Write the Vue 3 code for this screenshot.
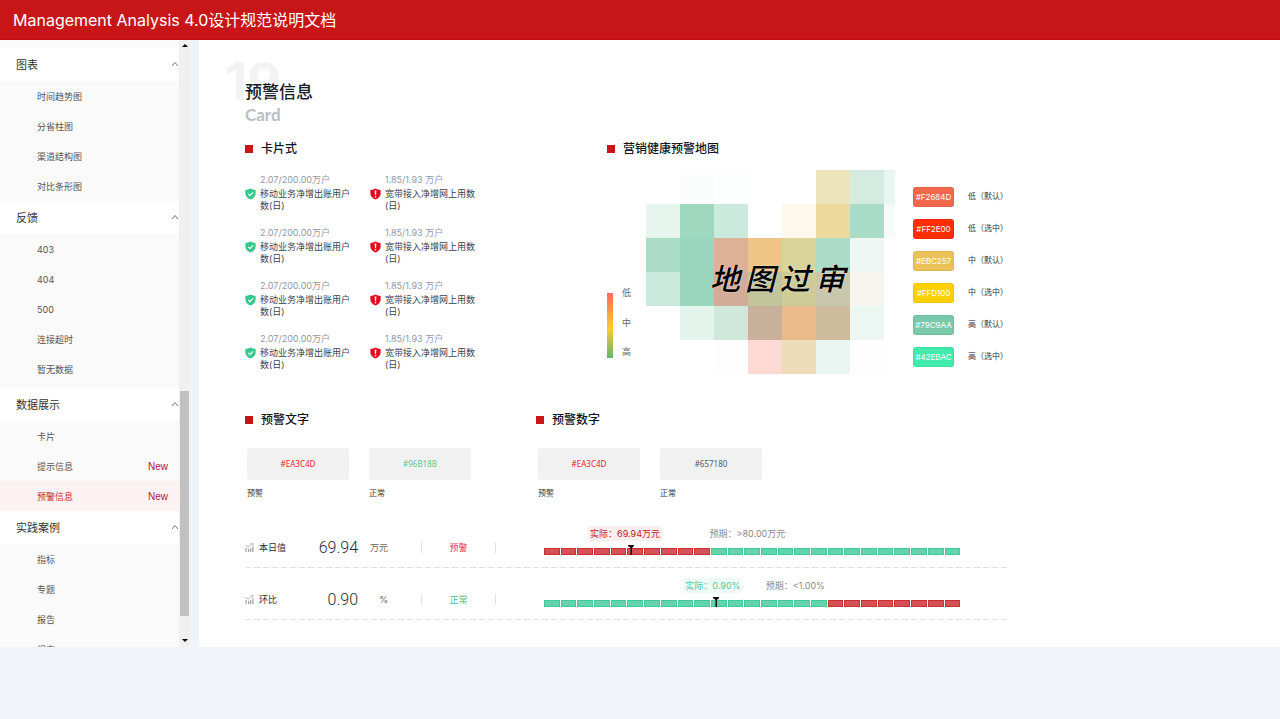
<template>
  <div class="page">
    <header class="topbar">
      <h1>Management Analysis 4.0设计规范说明文档</h1>
    </header>

    <div class="workspace">
      <aside class="sidebar">
        <nav class="menu">
          <section v-for="group in menu" :key="group.title" class="menu-group">
            <button type="button" class="menu-title">
              <span>{{ group.title }}</span>
              <svg class="chevron" viewBox="0 0 8 6">
                <path d="M1 5 L4 1.5 L7 5" fill="none" stroke="#777" stroke-width="1" />
              </svg>
            </button>
            <a
              v-for="item in group.items"
              :key="item.name"
              href="#"
              class="menu-item"
              :class="{ active: item.active }"
            >
              <span>{{ item.name }}</span>
              <span v-if="item.isNew" class="tag-new">New</span>
            </a>
          </section>
        </nav>
        <div class="scrollbar">
          <span class="arrow up" />
          <span class="thumb" />
          <span class="arrow down" />
        </div>
      </aside>

      <main class="content">
        <div class="title-block">
          <span class="title-no">19</span>
          <h2>预警信息</h2>
          <p>Card</p>
        </div>

        <div class="row-top">
          <section>
            <h3 class="section-title">卡片式</h3>
            <div class="cards">
              <template v-for="n in 4" :key="n">
                <div v-for="card in cards" :key="card.label" class="card">
                  <svg v-if="card.ok" class="shield" viewBox="0 0 12 12">
                    <path d="M6 0 Q8.5 1.4 11.6 1.6 V5.5 Q11.4 10 6 12 Q0.6 10 0.4 5.5 V1.6 Q3.5 1.4 6 0Z" fill="#35c78b" />
                    <path d="M3.4 5.8 L5.4 7.8 L8.8 4.2" fill="none" stroke="#fff" stroke-width="1.2" />
                  </svg>
                  <svg v-else class="shield" viewBox="0 0 12 12">
                    <path d="M6 0 Q8.5 1.4 11.6 1.6 V5.5 Q11.4 10 6 12 Q0.6 10 0.4 5.5 V1.6 Q3.5 1.4 6 0Z" fill="#e60c20" />
                    <path d="M5.1 2.3 H6.9 L6.6 7.2 H5.4Z" fill="#fff" />
                    <circle cx="6" cy="8.9" r="0.9" fill="#fff" />
                  </svg>
                  <div>
                    <div class="card-value">{{ card.value }}</div>
                    <div class="card-label">{{ card.label }}<br>{{ card.label2 }}</div>
                  </div>
                </div>
              </template>
            </div>
          </section>

          <section>
            <h3 class="section-title">营销健康预警地图</h3>
            <div class="map-body">
              <div class="legend">
                <span class="legend-bar" />
                <div class="legend-text">
                  <span>低</span>
                  <span>中</span>
                  <span>高</span>
                </div>
              </div>
              <div class="map">
                <span
                  v-for="(color, i) in mapCells"
                  :key="i"
                  :style="{ background: color }"
                />
                <div class="map-mark">
                  <span v-for="ch in '地图过审'" :key="ch">{{ ch }}</span>
                </div>
              </div>
              <ul class="swatches">
                <li v-for="s in swatches" :key="s.color">
                  <span class="swatch" :style="{ background: s.color }">{{ s.code }}</span>
                  <span>{{ s.label }}</span>
                </li>
              </ul>
            </div>
          </section>
        </div>

        <div class="row-mid">
          <section v-for="block in blocks" :key="block.title">
            <h3 class="section-title">{{ block.title }}</h3>
            <div class="samples">
              <div v-for="s in block.samples" :key="s.name">
                <div class="sample-box" :style="{ color: s.color }">{{ s.code }}</div>
                <div class="sample-name">{{ s.name }}</div>
              </div>
            </div>
          </section>
        </div>

        <div class="metrics">
          <div v-for="m in metrics" :key="m.name" class="metric">
            <div class="metric-info">
              <span class="metric-name">
                <svg class="chart-icon" viewBox="0 0 10 10">
                  <path d="M1.2 5.5 V10 M4 6.5 V10 M6.4 5.5 V10 M8.8 3.5 V10" stroke="#a3a3a3" stroke-width="1.4" />
                  <path d="M0.3 2.5 L3.6 4.4 L8.6 0.8 M6.8 0.6 H9 V2.6" fill="none" stroke="#a3a3a3" stroke-width="0.8" />
                </svg>
                {{ m.name }}
              </span>
              <span class="metric-value">{{ m.value }}</span>
              <span class="metric-unit">{{ m.unit }}</span>
              <span class="metric-status" :class="m.state">{{ m.status }}</span>
            </div>
            <div class="gauge">
              <span class="actual" :class="m.state" :style="{ left: `${m.actualPos}%` }">{{ m.actual }}</span>
              <span class="expected" :style="{ left: `${m.expectedPos}%` }">{{ m.expected }}</span>
              <div class="gauge-bar">
                <span
                  v-for="n in 25"
                  :key="n"
                  class="seg"
                  :class="{ bad: (n <= m.split) === m.badFirst }"
                />
                <svg class="marker" viewBox="0 0 6 10" :style="{ left: `${m.markerPos}%` }">
                  <path d="M0 0 H6 V1 L4 3 V10 H2.5 V3 L0 1Z" fill="#111" />
                </svg>
              </div>
            </div>
          </div>
        </div>
      </main>
    </div>
  </div>
</template>

<script setup>
const menu = [
  {
    title: '图表',
    items: [{ name: '时间趋势图' }, { name: '分省柱图' }, { name: '渠道结构图' }, { name: '对比条形图' }]
  },
  {
    title: '反馈',
    items: [{ name: '403' }, { name: '404' }, { name: '500' }, { name: '连接超时' }, { name: '暂无数据' }]
  },
  {
    title: '数据展示',
    items: [{ name: '卡片' }, { name: '提示信息', isNew: true }, { name: '预警信息', isNew: true, active: true }]
  },
  {
    title: '实践案例',
    items: [{ name: '指标' }, { name: '专题' }, { name: '报告' }, { name: '报表' }]
  }
]

const cards = [
  { ok: true, value: '2.07/200.00万户', label: '移动业务净增出账用户', label2: '数(日)' },
  { ok: false, value: '1.85/1.93 万户', label: '宽带接入净增网上用数', label2: '(日)' }
]

// 8 columns x 6 rows, the last column is cut off
const none = 'transparent'
const mapCells = [
  none, '#fafdfc', '#fdfefe', none, none, '#ece3ba', '#d4ebdf', '#e9f5f1',
  '#e6f5ee', '#9dd8bf', '#c9eadd', none, '#fef7ec', '#edd99b', '#a9dcc6', '#f6fbfa',
  '#abdcc8', '#9ad5bd', '#dcb196', '#f0c485', '#d9d49a', '#abdcc8', '#eef7f4', none,
  '#c9eadd', '#99d4bc', '#d1ad99', '#c2c49c', '#cfcb98', '#c8c7ac', '#f6f6ee', none,
  none, '#e3f4ed', '#cfe8db', '#c9b09a', '#ecbb8c', '#cfbc9c', '#ecf7f3', none,
  none, none, '#fefefe', '#fcdad3', '#eddcb8', '#e9f5f1', '#fefefe', none
]

const swatches = [
  { code: '#F2684D', color: '#f2684d', label: '低（默认）' },
  { code: '#FF2E00', color: '#ff2e00', label: '低（选中）' },
  { code: '#EBC257', color: '#ebc257', label: '中（默认）' },
  { code: '#FFD100', color: '#ffd100', label: '中（选中）' },
  { code: '#79C9AA', color: '#79c9aa', label: '高（默认）' },
  { code: '#42EBAC', color: '#42ebac', label: '高（选中）' }
]

const blocks = [
  {
    title: '预警文字',
    samples: [
      { code: '#EA3C4D', color: '#e8202c', name: '预警' },
      { code: '#96B18B', color: '#5fc794', name: '正常' }
    ]
  },
  {
    title: '预警数字',
    samples: [
      { code: '#EA3C4D', color: '#e8202c', name: '预警' },
      { code: '#657180', color: '#555b62', name: '正常' }
    ]
  }
]

const metrics = [
  {
    name: '本日值', value: '69.94', unit: '万元', status: '预警', state: 'warn',
    actual: '实际：69.94万元', actualPos: 10.6, expected: '预期：>80.00万元', expectedPos: 39.8,
    markerPos: 21, split: 10, badFirst: true
  },
  {
    name: '环比', value: '0.90', unit: '%', status: '正常', state: 'good',
    actual: '实际：0.90%', actualPos: 33.5, expected: '预期：<1.00%', expectedPos: 53.3,
    markerPos: 41.4, split: 17, badFirst: false
  }
]
</script>

<style>
body {
  margin: 0;
  background: #f0f4f9;
}
</style>

<style scoped>
.page {
  min-height: 100vh;
  background: #f0f4f9;
  font-family: Inter, "Noto Sans CJK SC", sans-serif;
  font-size: 9px;
  color: #333;
}

h1, h2, h3, p, ul {
  margin: 0;
  padding: 0;
  font-weight: normal;
}

.topbar {
  display: flex;
  align-items: center;
  height: 40px;
  box-sizing: border-box;
  padding: 0 13px;
  background: #c81618;
  border-bottom: 1px solid #b80c0e;
}

.topbar h1 {
  font-size: 16px;
  line-height: 24px;
  color: #fff;
}

.workspace {
  display: flex;
  gap: 9px;
  height: calc(100vh - 112px);
}

.sidebar {
  display: flex;
  flex: none;
  width: 190px;
  overflow: hidden;
  background: #fafafa;
}

.menu {
  flex: 1;
  padding-top: 8px;
}

.menu-group:nth-child(2) {
  padding-bottom: 4px;
}

.menu-title {
  display: flex;
  align-items: center;
  justify-content: space-between;
  width: 100%;
  height: 33px;
  padding: 0 0 1px 16px;
  border: 0;
  background: #fff;
  font-family: inherit;
  font-size: 11px;
  color: #333;
}

.chevron {
  width: 8px;
  height: 6px;
}

.menu-item {
  display: flex;
  align-items: center;
  justify-content: space-between;
  height: 30px;
  padding: 0 11px 0 37px;
  color: #555;
  text-decoration: none;
}

.menu-item.active {
  background: #fcf2f3;
  color: #c8282c;
}

.tag-new {
  font-family: "Liberation Sans", sans-serif;
  font-size: 10px;
  color: #b8123c;
}

.scrollbar {
  display: flex;
  flex-direction: column;
  align-items: center;
  width: 11px;
  background: #f0f0f0;
}

.thumb {
  width: 9px;
  height: 37%;
  margin: auto 0 16px;
  background: #c1c1c1;
}

.arrow {
  border: 3px solid transparent;
}

.arrow.up {
  margin-top: 1px;
  border-bottom-color: #000;
}

.arrow.down {
  margin: 7px 0 2px;
  border-top-color: #000;
}

.content {
  flex: 1;
  min-width: 0;
  padding: 40px 46px 0;
  background: #fff;
  overflow: hidden;
}

.title-block {
  position: relative;
}

.title-no {
  position: absolute;
  left: -20px;
  top: -26px;
  font-size: 52px;
  font-weight: bold;
  line-height: 56px;
  color: #f3f3f6;
}

.title-block h2 {
  position: relative;
  font-size: 17px;
  font-weight: 500;
  line-height: 24px;
  color: #111827;
}

.title-block p {
  position: relative;
  font-family: Lato, sans-serif;
  font-size: 17px;
  font-weight: bold;
  line-height: 22px;
  color: #b9bec6;
}

.row-top {
  display: grid;
  grid-template-columns: 362px 1fr;
  margin-top: 15px;
}

.section-title {
  display: flex;
  align-items: center;
  gap: 8px;
  font-size: 12px;
  font-weight: 500;
  line-height: 16px;
  color: #10141f;
}

.section-title::before {
  content: "";
  width: 8px;
  height: 8px;
  background: #c81618;
}

.cards {
  display: grid;
  grid-template-columns: 125px 125px;
  row-gap: 15px;
  padding-top: 17px;
}

.card {
  display: flex;
  gap: 4px;
  line-height: 12px;
  white-space: nowrap;
}

.shield {
  flex: none;
  width: 11px;
  height: 12px;
  margin-top: 14px;
}

.card-value {
  margin-bottom: 2px;
  color: #9297a8;
}

.card-label {
  color: #3a3f50;
}

.map-body {
  display: flex;
  padding-top: 13px;
}

.legend {
  display: flex;
  align-self: flex-end;
  gap: 9px;
  width: 39px;
  margin-bottom: 16px;
}

.legend-bar {
  width: 6px;
  height: 65px;
  align-self: flex-end;
  background: linear-gradient(#ff6a58, #fccb2e 55%, #62b474);
}

.legend-text {
  display: flex;
  flex-direction: column;
  justify-content: space-between;
  height: 71px;
  line-height: 12px;
  color: #666;
}

.map {
  position: relative;
  display: grid;
  grid-template-columns: repeat(7, 34px) 11px;
  grid-auto-rows: 34px;
}

.map-mark {
  position: absolute;
  left: 64px;
  top: 87px;
  display: flex;
  gap: 5px;
  font-size: 30px;
  font-style: italic;
  font-weight: 500;
  line-height: 44px;
  color: #000;
  text-shadow: 0 0 2px rgba(255, 255, 255, 0.7);
}

.swatches {
  display: flex;
  flex-direction: column;
  gap: 12px;
  margin: 17px 0 0 18px;
  list-style: none;
  font-size: 8px;
  line-height: 18px;
}

.swatches li {
  display: flex;
  align-items: flex-start;
  gap: 14px;
  white-space: nowrap;
}

.swatch {
  width: 41px;
  height: 20px;
  box-sizing: border-box;
  border: 1px solid rgba(0, 0, 0, 0.06);
  border-radius: 3px;
  text-align: center;
  color: #fff;
}

.row-mid {
  display: grid;
  grid-template-columns: 291px 1fr;
  margin-top: 38px;
}

.samples {
  display: flex;
  gap: 20px;
  padding: 20px 0 0 2px;
  font-size: 8px;
}

.sample-box {
  width: 102px;
  height: 32px;
  border-radius: 3px;
  background: #f1f1f1;
  font-family: "Noto Sans", sans-serif;
  line-height: 32px;
  text-align: center;
}

.sample-name {
  margin-top: 7px;
  line-height: 12px;
}

.metrics {
  max-width: 762px;
  margin-top: 17px;
}

.metric {
  display: flex;
  height: 52px;
  background: repeating-linear-gradient(to right, #dfe1e8 0 6px, transparent 6px 9px) left bottom / 100% 1px no-repeat;
}

.metric-info {
  display: flex;
  align-items: center;
  flex: none;
  padding-top: 11px;
}

.metric-name {
  display: flex;
  align-items: center;
  gap: 5px;
  width: 68px;
  color: #222c3a;
}

.chart-icon {
  width: 9px;
  height: 9px;
}

.metric-value {
  width: 45px;
  font-family: Roboto, sans-serif;
  font-size: 16px;
  font-weight: 300;
  text-align: right;
  color: #222c3a;
}

.metric-unit {
  width: 30px;
  text-align: right;
  color: #666;
}

.metric-status {
  width: 73px;
  height: 11px;
  margin: 0 48px 0 33px;
  border: solid #dfe1e6;
  border-width: 0 1px;
  line-height: 11px;
  text-align: center;
}

.metric-status.warn {
  color: #ea3c4d;
}

.metric-status.good {
  color: #4ebd88;
}

.gauge {
  position: relative;
  flex: 1;
  max-width: 416px;
  padding-top: 32px;
}

.actual,
.expected {
  position: absolute;
  top: 10px;
  line-height: 15px;
  white-space: nowrap;
}

.actual {
  padding: 0 2px;
  border-radius: 2px;
}

.actual.warn {
  background: #fbeeee;
  color: #c4181f;
}

.actual.good {
  background: #effbf6;
  color: #4fcb9b;
}

.expected {
  color: #888;
}

.gauge-bar {
  position: relative;
  display: flex;
  gap: 1px;
  height: 7px;
}

.seg {
  flex: 1;
  box-sizing: border-box;
  border: 1px solid #42c998;
  background: #62d3ab;
}

.seg.bad {
  border-color: #c92f33;
  background: #d45255;
}

.marker {
  position: absolute;
  top: -3px;
  width: 6px;
  height: 10px;
  margin-left: -3px;
}
</style>
